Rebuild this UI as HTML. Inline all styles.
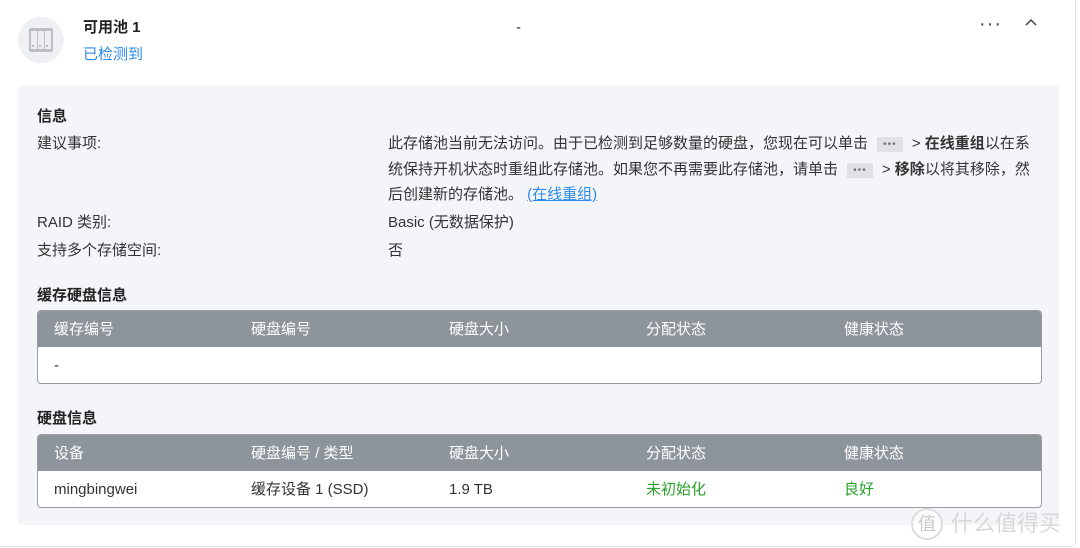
<!DOCTYPE html><html><head><meta charset="utf-8"><style>
body{margin:0;width:1080px;height:548px;background:#fff;font-family:"Liberation Sans","Noto Sans CJK SC",sans-serif;font-size:15px;color:#333;position:relative;overflow:hidden}
.a{position:absolute;white-space:nowrap;line-height:20px}
.outer{position:absolute;left:-2px;top:-2px;width:1076px;height:547px;border:1px solid #e3e5e8;border-radius:4px}
.panel{position:absolute;left:18px;top:85px;width:1041px;height:440px;background:#f4f5f9;border-radius:4px}
.h{font-weight:bold;color:#222;font-size:15px}
.tb{position:absolute;left:37px;width:1003px;border:1px solid #999da3;border-radius:4px;background:#fff;overflow:hidden}
.th{height:36px;background:#8e949b;color:#fff;position:relative}
.tr{height:36px;position:relative}
.th span,.tr span{position:absolute;top:9px;line-height:20px}
.dots{display:inline-block;background:#dfe1e5;color:#777;font-size:10px;padding:0 6px;line-height:15px;margin:0 5px;vertical-align:1px;letter-spacing:1px}
</style></head><body>
<div class="outer"></div>
<div class="a" style="left:18px;top:17px;width:46px;height:46px;border-radius:50%;background:#eef0f4"></div>
<svg class="a" style="left:28px;top:27px" width="26" height="26" viewBox="0 0 26 26"><rect x="1" y="1" width="24" height="24" rx="2" fill="#bcbec2"/><rect x="3" y="4" width="6" height="18" fill="#eceef1"/><rect x="10" y="4" width="6" height="18" fill="#eceef1"/><rect x="17" y="4" width="6" height="18" fill="#eceef1"/><rect x="4" y="18" width="2" height="1.5" fill="#aaa"/><rect x="11" y="18" width="2" height="1.5" fill="#aaa"/><rect x="18" y="18" width="2" height="1.5" fill="#aaa"/></svg>
<div class="a" style="left:83px;top:18px;font-weight:bold;font-size:15px;color:#222">可用池 1</div>
<div class="a" style="left:83px;top:45px;color:#2d8ceb">已检测到</div>
<div class="a" style="left:516px;top:18px">-</div>
<div class="a" style="left:979px;top:14px;font-size:20px;color:#444;letter-spacing:1px">···</div>
<svg class="a" style="left:1025px;top:18px" width="12" height="10"><path d="M1 7 L6 2 L11 7" stroke="#444" stroke-width="1.5" fill="none"/></svg>
<div class="panel"></div>
<div class="a h" style="left:37px;top:107px">信息</div>
<div class="a" style="left:37px;top:134px">建议事项:</div>
<div class="a" style="left:388px;top:131px;line-height:25.5px">此存储池当前无法访问。由于已检测到足够数量的硬盘，您现在可以单击 <span class="dots">•••</span> &gt; <b>在线重组</b>以在系<br>统保持开机状态时重组此存储池。如果您不再需要此存储池，请单击 <span class="dots">•••</span> &gt; <b>移除</b>以将其移除，然<br>后创建新的存储池。 <span style="color:#2d8ceb;text-decoration:underline">(在线重组)</span></div>
<div class="a" style="left:37px;top:213px">RAID 类别:</div>
<div class="a" style="left:388px;top:213px">Basic (无数据保护)</div>
<div class="a" style="left:37px;top:241px">支持多个存储空间:</div>
<div class="a" style="left:388px;top:241px">否</div>
<div class="a h" style="left:37px;top:286px">缓存硬盘信息</div>
<div class="tb" style="top:310px"><div class="th"><span style="left:16px">缓存编号</span><span style="left:213px">硬盘编号</span><span style="left:411px">硬盘大小</span><span style="left:608px">分配状态</span><span style="left:806px">健康状态</span></div><div class="tr"><span style="left:16px">-</span></div></div>
<div class="a h" style="left:37px;top:409px">硬盘信息</div>
<div class="tb" style="top:434px"><div class="th"><span style="left:16px">设备</span><span style="left:213px">硬盘编号 / 类型</span><span style="left:411px">硬盘大小</span><span style="left:608px">分配状态</span><span style="left:806px">健康状态</span></div><div class="tr"><span style="left:16px">mingbingwei</span><span style="left:213px">缓存设备 1 (SSD)</span><span style="left:411px">1.9 TB</span><span style="left:608px;color:#27a32a">未初始化</span><span style="left:806px;color:#27a32a">良好</span></div></div>
<div class="a" style="left:911px;top:508px;width:28px;height:28px;border-radius:50%;border:2px solid #ddd;color:#ccc;font-size:18px;text-align:center;line-height:28px;background:rgba(255,255,255,.6)">值</div>
<div class="a" style="left:951px;top:510px;font-size:22px;line-height:28px;color:#d8d8d8">什么值得买</div>
</body></html>
